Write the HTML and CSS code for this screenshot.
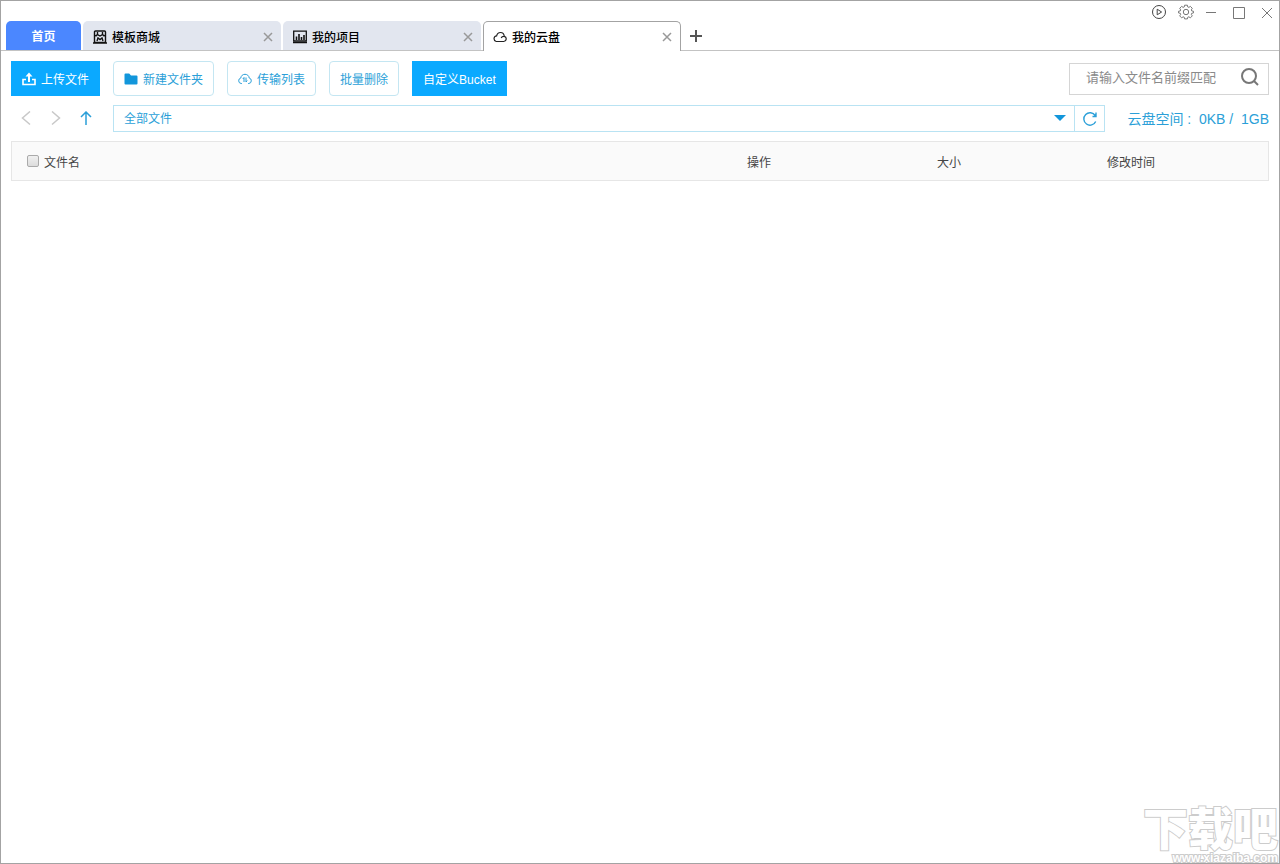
FILE: index.html
```html
<!DOCTYPE html>
<html lang="zh-CN">
<head>
  <meta charset="UTF-8">
  <title>我的云盘</title>
  <meta name="viewport" content="width=device-width, initial-scale=1.0">
  <link rel="stylesheet" href="styles.css">
</head>
<body>

<div class="window">
  <header class="title-bar">
    <div class="window-controls">
      <button type="button" aria-label="播放">
        <svg width="16" height="16" viewBox="0 0 16 16" fill="none" stroke="#444"><circle cx="8" cy="8" r="6.5"/><path d="M6.2 5.2v5.6L10.6 8z"/></svg>
      </button>
      <button type="button" aria-label="设置">
        <svg width="16" height="16" viewBox="0 0 16 16" fill="none" stroke="#777" stroke-linejoin="round"><path d="M6.6 1.2h2.8l.4 1.8 1 .4 1.6-1 1.9 1.9-1 1.6.4 1 1.8.4v1.6l-1.8.4-.4 1 1 1.6-1.9 1.9-1.6-1-1 .4-.4 1.7H6.6l-.4-1.7-1-.4-1.6 1-1.9-1.9 1-1.6-.4-1-1.8-.4V7.3l1.8-.4.4-1-1-1.6 1.900-1.900 1.600 1 1-.4z"/><circle cx="8" cy="8" r="2.7"/></svg>
      </button>
      <button type="button" aria-label="最小化">
        <svg width="16" height="16" viewBox="0 0 16 16" stroke="#777"><path d="M1 8.500h10"/></svg>
      </button>
      <button type="button" aria-label="最大化">
        <svg width="16" height="16" viewBox="0 0 16 16" fill="none" stroke="#777"><path d="M1.500 3.500h11v11h-11z"/></svg>
      </button>
      <button type="button" aria-label="关闭">
        <svg width="16" height="16" viewBox="0 0 16 16" stroke="#777"><path d="M3 4l10 10M13 4L3 14"/></svg>
      </button>
    </div>
  </header>

  <nav class="tabs">
    <a class="tab tab-home" href="#home">首页</a>
    <div class="tab">
      <svg width="14" height="14" viewBox="0 0 14 14" fill="none" stroke="#111" stroke-width="1.400"><path d="M2.500 1h9q1 0 1 1v10.500h-11V2q0-1 1-1zM1.500 5l1.500.8 1.500-1.300M12.500 5L11 5.800 9.500 4.500M4.500 2v2.500L7 6l2.500-1.500V2M0 13h14M4 11l1-3 2 1.500L9 8l1 3"/></svg>
      <a href="#templates">模板商城</a>
      <button type="button" class="tab-close" aria-label="关闭模板商城"><svg width="10" height="10" viewBox="0 0 10 10"><path d="M1 1l8 8M9 1L1 9"/></svg></button>
    </div>
    <div class="tab">
      <svg width="14" height="14" viewBox="0 0 14 14" fill="none" stroke="#111"><path d="M.7 1.200h12.600v9.800H.7z" stroke-width="1.300"/><path d="M3.500 10V6.500M6 10V4M8.500 10V7M11 10V5" stroke-width="1.600"/><path d="M0 12.500h14" stroke-width="1.500"/></svg>
      <a href="#projects">我的项目</a>
      <button type="button" class="tab-close" aria-label="关闭我的项目"><svg width="10" height="10" viewBox="0 0 10 10"><path d="M1 1l8 8M9 1L1 9"/></svg></button>
    </div>
    <div class="tab tab-active">
      <svg width="14" height="14" viewBox="0 0 14 14" fill="none" stroke="#222" stroke-width="1.200"><path d="M3.200 11.500h7.600a2.600 2.600 0 0 0 .5-5.100C11 3.700 9.300 2.500 7.500 2.500c-2 0-3.500 1.400-3.900 3.400A2.850 2.850 0 0 0 3.200 11.500zM10.800 6.300c-1.300 0-2.200.6-2.600 1.700"/></svg>
      <a href="#cloud">我的云盘</a>
      <button type="button" class="tab-close" aria-label="关闭我的云盘"><svg width="10" height="10" viewBox="0 0 10 10"><path d="M1 1l8 8M9 1L1 9"/></svg></button>
    </div>
    <button type="button" class="tab-add" aria-label="新建标签">
      <svg width="12" height="12" viewBox="0 0 12 12" stroke="#555" stroke-width="2"><path d="M6 0v12M0 6h12"/></svg>
    </button>
  </nav>

  <main class="content">
    <div class="toolbar">
      <button type="button" class="btn btn-primary">
        <svg width="14" height="14" viewBox="0 0 14 14" fill="none" stroke="#fff"><path d="M4 7.500H1v5h12v-5h-3" stroke-width="1.600"/><path d="M7 10V3" stroke-width="2"/><path d="M3.500 4.500L7 .5l3.500 4z" fill="#fff" stroke="none"/></svg>
        上传文件
      </button>
      <button type="button" class="btn">
        <svg width="14" height="14" viewBox="0 0 14 14" fill="#1296db"><path d="M.5 2.500q0-1 1-1h3.700L7 3.500h5.500q1 0 1 1v7q0 1-1 1h-11q-1 0-1-1z"/></svg>
        新建文件夹
      </button>
      <button type="button" class="btn">
        <svg width="14" height="14" viewBox="0 0 14 14" fill="none" stroke="#2b9fd8"><path d="M4 11.500h-.8A2.800 2.800 0 0 1 2.800 6C3 3.700 4.800 2.300 7 2.300s4 1.400 4.200 3.700a2.800 2.800 0 0 1-.4 5.500H10M6 10V5.500L4.800 7M8 5.500V10l1.200-1.500"/></svg>
        传输列表
      </button>
      <button type="button" class="btn">批量删除</button>
      <button type="button" class="btn btn-primary">自定义Bucket</button>
      <form class="search">
        <input type="text" placeholder="请输入文件名前缀匹配" aria-label="搜索文件">
        <button type="submit" aria-label="搜索">
          <svg width="20" height="20" viewBox="0 0 20 20" fill="none" stroke="#777" stroke-width="2"><circle cx="9" cy="8" r="7"/><path d="M14 13l4 4"/></svg>
        </button>
      </form>
    </div>

    <div class="path-row">
      <div class="path-nav">
        <button type="button" aria-label="后退"><svg width="16" height="16" viewBox="0 0 16 16" fill="none" stroke="#c8c8c8" stroke-width="1.500"><path d="M12 .5L4.500 7l7.500 6.500"/></svg></button>
        <button type="button" aria-label="前进"><svg width="16" height="16" viewBox="0 0 16 16" fill="none" stroke="#c8c8c8" stroke-width="1.500"><path d="M4 .5L11.500 7 4 13.500"/></svg></button>
        <button type="button" aria-label="上一级"><svg width="16" height="16" viewBox="0 0 16 16" fill="none" stroke="#2b9fd8" stroke-width="1.500"><path d="M8 14V1M3 6l5-5 5 5"/></svg></button>
      </div>
      <div class="path-box">
        <select aria-label="当前路径">
          <option>全部文件</option>
        </select>
        <svg class="path-arrow" width="12" height="6" viewBox="0 0 12 6" fill="#1296db"><path d="M0 0h12L6 6z"/></svg>
      </div>
      <button type="button" class="refresh" aria-label="刷新">
        <svg width="16" height="16" viewBox="0 0 16 16" fill="none" stroke="#2b9fd8" stroke-width="1.400"><path d="M13.700 10.500A6.200 6.200 0 1 1 13.200 4.500M14 1.500v4h-3.500"/></svg>
      </button>
      <div class="space">云盘空间 : &nbsp;0KB / &nbsp;1GB</div>
    </div>

    <table class="file-table">
      <thead>
        <tr>
          <th><label><input type="checkbox">文件名</label></th>
          <th class="col-action">操作</th>
          <th class="col-size">大小</th>
          <th class="col-time">修改时间</th>
        </tr>
      </thead>
    </table>
  </main>

  <div class="watermark">
    <div class="watermark-name">下载吧</div>
    <div class="watermark-url">www.xiazaiba.com</div>
  </div>
</div>

</body>
</html>
```

FILE: styles.css
```css
* {
  box-sizing: border-box;
}

body {
  margin: 0;
  font-family: "Liberation Sans", "Noto Sans CJK SC", sans-serif;
  font-size: 12px;
  color: #444;
}

button {
  font: inherit;
  padding: 0;
  border: none;
  background: none;
  cursor: pointer;
}

a {
  color: inherit;
  text-decoration: none;
}

svg {
  display: block;
  flex: none;
}

.window {
  position: relative;
  min-height: 100vh;
  border: 1px solid #a3a3a3;
  background-color: #fff;
  overflow: hidden;
}

/* title bar */
.title-bar {
  height: 20px;
}

.window-controls {
  display: flex;
  justify-content: flex-end;
  gap: 11px;
  padding: 3px 4px 0 0;
}

/* tabs */
.tabs {
  display: flex;
  gap: 2px;
  height: 30px;
  padding-left: 5px;
  border-bottom: 1px solid #c3c3c3;
}

.tab {
  display: flex;
  align-items: center;
  gap: 5px;
  width: 198px;
  height: 29px;
  padding: 2px 8px 0 10px;
  border-radius: 5px 5px 0 0;
  background-color: #e2e6ef;
  color: #000;
  font-weight: 500;
}

.tab-home {
  justify-content: center;
  width: 75px;
  padding: 0;
  background-color: #4b87ff;
  color: #fff;
  font-weight: bold;
}

.tab-active {
  height: 30px;
  padding: 0 8px 0 9px;
  border: 1px solid #a3a3a3;
  border-bottom: none;
  background-color: #fff;
}

.tab-close {
  margin-left: auto;
}

.tab-close svg {
  stroke: #999;
  stroke-width: 1.5;
}

.tab-add {
  margin-left: 7px;
}

/* toolbar */
.content {
  padding: 10px;
}

.toolbar {
  display: flex;
  align-items: center;
  gap: 13px;
}

.btn {
  display: flex;
  align-items: center;
  gap: 5px;
  height: 35px;
  padding: 0 10px;
  border: 1px solid #c4e6f2;
  border-radius: 4px;
  color: #2b9fd8;
}

.btn-primary {
  border-color: #0ba9ff;
  border-radius: 0;
  background-color: #0ba9ff;
  color: #fff;
}

.search {
  display: flex;
  align-items: center;
  width: 200px;
  height: 32px;
  margin-left: auto;
  padding: 0 8px 2px 16px;
  border: 1px solid #d5d5d5;
}

.search input {
  flex: 1;
  min-width: 0;
  padding: 0;
  border: none;
  outline: none;
  font-family: inherit;
  font-size: 13px;
}

.search input::placeholder {
  color: #8a8a8a;
}

/* path */
.path-row {
  display: flex;
  align-items: center;
  height: 27px;
  margin-top: 9px;
}

.path-nav {
  display: flex;
  gap: 14px;
  width: 102px;
  padding-left: 7px;
}

.path-box {
  position: relative;
  flex: 1;
}

.path-box select {
  display: block;
  width: 100%;
  height: 27px;
  padding: 0 10px;
  border: 1px solid #b9e3f3;
  border-radius: 0;
  background: #fff;
  appearance: none;
  font-family: inherit;
  font-size: 12px;
  color: #2b9fd8;
}

.path-arrow {
  position: absolute;
  top: 10px;
  right: 9px;
  pointer-events: none;
}

.refresh {
  display: flex;
  align-items: center;
  justify-content: center;
  width: 30px;
  height: 27px;
  border: 1px solid #b9e3f3;
  border-left: none;
}

.space {
  width: 164px;
  padding-left: 20px;
  font-size: 14px;
  line-height: 20px;
  color: #2b9fd8;
  text-align: right;
  white-space: nowrap;
}

/* file list */
.file-table {
  width: 100%;
  margin-top: 9px;
  border: 1px solid #e6e6e6;
  border-spacing: 0;
  background-color: #fafafa;
  table-layout: fixed;
}

.file-table th {
  height: 38px;
  padding: 0;
  font-weight: normal;
  text-align: left;
}

.file-table label {
  display: flex;
  align-items: center;
  gap: 5px;
  padding-left: 15px;
}

.file-table input {
  appearance: none;
  width: 12px;
  height: 12px;
  margin: 0;
  border: 1px solid #aaa;
  border-radius: 2px;
  background: linear-gradient(#f0f0f0, #dcdcdc);
}

.file-table input:checked {
  background: #0ba9ff;
}

.col-action {
  width: 190px;
}

.col-size {
  width: 170px;
}

.col-time {
  width: 161px;
}

/* watermark */
.watermark {
  position: absolute;
  right: 1px;
  bottom: 0;
  color: #fff;
  text-align: right;
  pointer-events: none;
}

.watermark-name {
  font-size: 45px;
  font-weight: 900;
  line-height: 44px;
  -webkit-text-stroke: 2px #ccc;
  paint-order: stroke fill;
}

.watermark-url {
  font-size: 12px;
  font-weight: bold;
  line-height: 10px;
  -webkit-text-stroke: 2px #ccc;
  paint-order: stroke fill;
}
```
